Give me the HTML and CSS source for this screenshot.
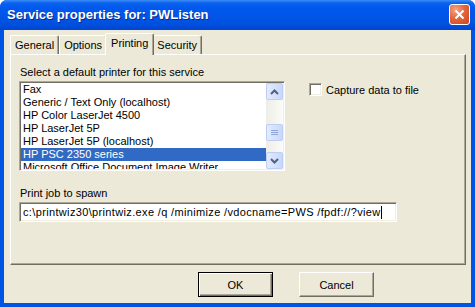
FILE: index.html
```html
<!DOCTYPE html>
<html lang="en">
<head>
  <meta charset="UTF-8">
  <title>Service properties for: PWListen</title>
  <link rel="stylesheet" href="styles.css">
</head>
<body>
  <div class="window">
    <div class="titlebar">
      <span class="title">Service properties for: PWListen</span>
      <button class="close-btn">
        <svg width="11" height="11" viewBox="0 0 11 11"><path d="M1.5 1.5 L9.5 9.5 M9.5 1.5 L1.5 9.5" stroke="#fff" stroke-width="2" fill="none"/></svg>
      </button>
    </div>

    <div class="dialog">
      <div class="tabs">
        <span class="tab">General</span>
        <span class="tab">Options</span>
        <span class="tab active">Printing</span>
        <span class="tab">Security</span>
      </div>

      <div class="panel">
        <p class="label">Select a default printer for this service</p>
        <div class="printer-row">
          <div class="listbox">
            <ul class="items">
              <li>Fax</li>
              <li>Generic / Text Only (localhost)</li>
              <li>HP Color LaserJet 4500</li>
              <li>HP LaserJet 5P</li>
              <li>HP LaserJet 5P (localhost)</li>
              <li class="selected">HP PSC 2350 series</li>
              <li>Microsoft Office Document Image Writer</li>
            </ul>
            <div class="scrollbar">
              <span class="sb-btn">
                <svg width="9" height="6" viewBox="0 0 9 6"><path d="M1 5 L4.5 1.5 L8 5" stroke="#4d6185" stroke-width="2" fill="none"/></svg>
              </span>
              <span class="sb-track">
                <span class="sb-thumb">
                  <svg width="7" height="7" viewBox="0 0 7 7"><path d="M0 1.5 H7 M0 3.5 H7 M0 5.5 H7" stroke="#8ea6dc" stroke-width="1" fill="none"/></svg>
                </span>
              </span>
              <span class="sb-btn">
                <svg width="9" height="6" viewBox="0 0 9 6"><path d="M1 1 L4.5 4.5 L8 1" stroke="#4d6185" stroke-width="2" fill="none"/></svg>
              </span>
            </div>
          </div>
          <label class="check"><span class="checkbox"></span>Capture data to file</label>
        </div>

        <p class="label spawn">Print job to spawn</p>
        <div class="textbox">c:\printwiz30\printwiz.exe /q /minimize /vdocname=PWS /fpdf://?view<span class="caret"></span></div>
      </div>

      <div class="buttons">
        <button class="btn default">OK</button>
        <button class="btn">Cancel</button>
      </div>
    </div>
  </div>
</body>
</html>
```

FILE: styles.css
```css
body {
  margin: 0;
  padding: 0;
  background: #fff;
  font-family: "Liberation Sans", Arial, sans-serif;
  font-size: 11px;
  color: #000;
}

.window {
  width: 475px;
  height: 307px;
  box-sizing: border-box;
  display: flex;
  flex-direction: column;
  background: #0054e3;
  border-radius: 7px 7px 0 0;
  overflow: hidden;
}

.titlebar {
  height: 30px;
  flex: none;
  display: flex;
  align-items: center;
  justify-content: space-between;
  padding: 0 5px 2px 7px;
  box-sizing: border-box;
  background: linear-gradient(to bottom, #3d8cf7 0, #0b63ee 3px, #0058ee 8px, #0055e5 18px, #004fdd 25px, #0045d0 30px);
}

.title {
  color: #fff;
  font-size: 13px;
  font-weight: bold;
  text-shadow: 1px 1px 0 #0a2a8a;
}

.close-btn {
  width: 21px;
  height: 21px;
  padding: 0;
  display: flex;
  align-items: center;
  justify-content: center;
  border: 1px solid #fff;
  border-radius: 3px;
  background: radial-gradient(circle at 30% 25%, #f6a488 0, #e5653c 45%, #cc4420 100%);
}

.dialog {
  flex: 1;
  margin: 0 4px 4px 4px;
  background: #ece9d8;
  padding-top: 3px;
  display: flex;
  flex-direction: column;
}

.tabs {
  display: flex;
  align-items: flex-end;
  height: 21px;
  padding-left: 6px;
}

.tab {
  height: 19px;
  box-sizing: border-box;
  padding: 3px 4px 0 4px;
  border-top: 1px solid #fff;
  border-left: 1px solid #fff;
  border-right: 1px solid #716f64;
  box-shadow: inset -1px 0 0 #aca899;
  border-radius: 2px 2px 0 0;
  background: #ece9d8;
}

.tab.active {
  height: 22px;
  margin: 0 -2px -1px -2px;
  padding: 3px 5px 0 5px;
  position: relative;
  z-index: 1;
}

.panel {
  margin-left: 6px;
  width: 456px;
  height: 211px;
  box-sizing: border-box;
  border-top: 1px solid #fff;
  border-left: 1px solid #fff;
  border-right: 1px solid #716f64;
  border-bottom: 1px solid #716f64;
  box-shadow: inset -1px -1px 0 #aca899;
  padding: 11px 0 0 8px;
}

.label {
  margin: 0;
  line-height: 13px;
  padding-left: 1px;
}

.printer-row {
  display: flex;
  align-items: flex-start;
  gap: 24px;
  margin-top: 2px;
}

.listbox {
  width: 266px;
  height: 90px;
  box-sizing: border-box;
  display: flex;
  background: #fff;
  border-top: 1px solid #aca899;
  border-left: 1px solid #aca899;
  border-right: 1px solid #fff;
  border-bottom: 1px solid #fff;
  box-shadow: inset 1px 1px 0 #716f64, inset -1px -1px 0 #f1efe2;
  padding: 1px;
  overflow: hidden;
}

.items {
  flex: 1;
  list-style: none;
  margin: 0;
  padding: 0;
  overflow: hidden;
}

.items li {
  height: 13px;
  line-height: 13px;
  padding-left: 2px;
  white-space: nowrap;
}

.items li.selected {
  background: #316ac5;
  color: #fff;
}

.scrollbar {
  width: 17px;
  flex: none;
  display: flex;
  flex-direction: column;
  background: #f4f3ee;
}

.sb-btn,
.sb-thumb {
  display: flex;
  align-items: center;
  justify-content: center;
  box-sizing: border-box;
  border: 1px solid #bccef7;
  border-radius: 2px;
  background: linear-gradient(to right, #e3ebfd, #c8d8fb);
}

.sb-btn {
  height: 17px;
}

.sb-track {
  flex: 1;
  display: flex;
  flex-direction: column;
  padding-top: 24px;
  background: linear-gradient(to right, #eeede5, #fbfbf8);
}

.sb-thumb {
  height: 17px;
}

.check {
  display: flex;
  align-items: center;
  gap: 4px;
  margin-top: 2px;
}

.checkbox {
  width: 13px;
  height: 13px;
  box-sizing: border-box;
  background: #fff;
  border-top: 1px solid #aca899;
  border-left: 1px solid #aca899;
  border-right: 1px solid #fff;
  border-bottom: 1px solid #fff;
  box-shadow: inset 1px 1px 0 #716f64, inset -1px -1px 0 #f1efe2;
}

.label.spawn {
  margin-top: 16px;
}

.textbox {
  width: 378px;
  height: 20px;
  box-sizing: border-box;
  margin-top: 2px;
  background: #fff;
  border-top: 1px solid #aca899;
  border-left: 1px solid #aca899;
  border-right: 1px solid #fff;
  border-bottom: 1px solid #fff;
  box-shadow: inset 1px 1px 0 #716f64, inset -1px -1px 0 #f1efe2;
  padding: 3px 0 0 3px;
  line-height: 13px;
  letter-spacing: 0.35px;
  white-space: nowrap;
  display: flex;
  align-items: flex-start;
}

.caret {
  display: inline-block;
  width: 1px;
  height: 13px;
  background: #000;
}

.buttons {
  display: flex;
  gap: 26px;
  padding-left: 194px;
  margin-top: 7px;
}

.btn {
  width: 75px;
  height: 25px;
  padding: 0;
  font-family: "Liberation Sans", Arial, sans-serif;
  font-size: 11px;
  color: #000;
  background: #ece9d8;
  border-top: 1px solid #fff;
  border-left: 1px solid #fff;
  border-right: 1px solid #716f64;
  border-bottom: 1px solid #716f64;
  box-shadow: inset -1px -1px 0 #aca899;
}

.btn.default {
  border: 1px solid #000;
  box-shadow: inset 1px 1px 0 #fff, inset -1px -1px 0 #716f64, inset -2px -2px 0 #aca899;
}
```
